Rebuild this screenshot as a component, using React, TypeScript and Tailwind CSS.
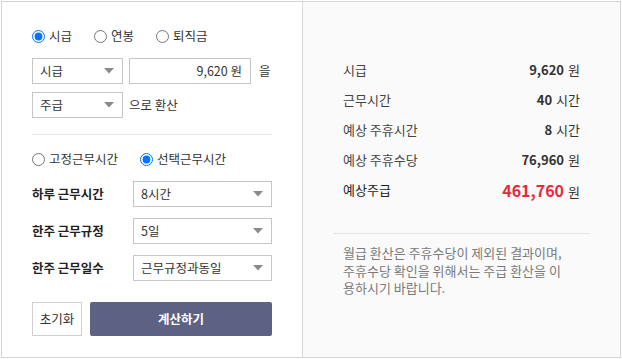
import { useState } from 'react';

const font = { fontFamily: '"Noto Sans CJK KR", "Noto Sans", sans-serif' };

function Radio({ label, checked, onChange }: { label: string; checked: boolean; onChange: () => void }) {
  return (
    <label className="flex items-center gap-[4px] cursor-pointer">
      <input type="radio" checked={checked} onChange={onChange} className="m-0 w-[13px] h-[13px]" />
      <span className="text-[12.5px] text-[#333] leading-4">{label}</span>
    </label>
  );
}

function FakeSelect({ value, className }: { value: string; className: string }) {
  return (
    <div className={`flex items-center justify-between h-[26px] border border-[#c6c6c6] bg-white pl-[7px] pr-[8px] ${className}`}>
      <span className="text-[12.5px] text-[#333]">{value}</span>
      <svg width="10" height="6" viewBox="0 0 10 6">
        <polygon points="0,0 10,0 5,5.5" fill="#8a8a8a" />
      </svg>
    </div>
  );
}

function ResultRow({ label, value, unit, highlight }: { label: string; value: string; unit: string; highlight?: boolean }) {
  return (
    <div className="flex items-center justify-between h-[30px]">
      <span className={`text-[13px] ${highlight ? 'text-[#222]' : 'text-[#444]'}`}>{label}</span>
      <span className="flex items-baseline gap-[4px]">
        <span className={highlight ? 'text-[16px] font-bold text-[#e8293b]' : 'text-[13px] font-bold text-[#333]'}>{value}</span>
        <span className="text-[13px] text-[#333]">{unit}</span>
      </span>
    </div>
  );
}

export default function App() {
  const [payType, setPayType] = useState('hourly');
  const [workType, setWorkType] = useState('select');

  return (
    <div className="w-[622px] h-[359px] bg-white pl-px pt-px" style={font}>
      <div className="w-[620px] h-[357px] border border-[#d4d4d4] flex">
        {/* 입력 영역 */}
        <div className="w-[301px] border-r border-[#d9d9d9] bg-white pl-[30px] pt-[26px]">
          <div className="flex items-center gap-[22px] h-4">
            <Radio label="시급" checked={payType === 'hourly'} onChange={() => setPayType('hourly')} />
            <Radio label="연봉" checked={payType === 'yearly'} onChange={() => setPayType('yearly')} />
            <Radio label="퇴직금" checked={payType === 'retire'} onChange={() => setPayType('retire')} />
          </div>

          <div className="flex items-center mt-[14px]">
            <FakeSelect value="시급" className="w-[91px]" />
            <div className="w-[122px] h-[26px] ml-[6px] border border-[#c6c6c6] flex items-center justify-end pr-[8px]">
              <span className="text-[12.5px] text-[#333]">9,620 원</span>
            </div>
            <span className="ml-[8px] text-[12.5px] text-[#333]">을</span>
          </div>

          <div className="flex items-center mt-[8px]">
            <FakeSelect value="주급" className="w-[91px]" />
            <span className="ml-[6px] text-[12.5px] text-[#333]">으로 환산</span>
          </div>

          <div className="w-[240px] h-px bg-[#e6e6e6] mt-[16px]" />

          <div className="flex items-center gap-[22px] h-4 mt-[16px]">
            <Radio label="고정근무시간" checked={workType === 'fixed'} onChange={() => setWorkType('fixed')} />
            <Radio label="선택근무시간" checked={workType === 'select'} onChange={() => setWorkType('select')} />
          </div>

          <div className="flex flex-col gap-[11px] mt-[14px] w-[240px]">
            <div className="flex items-center justify-between">
              <span className="text-[12.5px] font-bold text-[#222]">하루 근무시간</span>
              <FakeSelect value="8시간" className="w-[139px]" />
            </div>
            <div className="flex items-center justify-between">
              <span className="text-[12.5px] font-bold text-[#222]">한주 근무규정</span>
              <FakeSelect value="5일" className="w-[139px]" />
            </div>
            <div className="flex items-center justify-between">
              <span className="text-[12.5px] font-bold text-[#222]">한주 근무일수</span>
              <FakeSelect value="근무규정과동일" className="w-[139px]" />
            </div>
          </div>

          <div className="flex gap-[8px] mt-[21px] w-[240px]">
            <button className="w-[50px] h-[34px] border border-[#cfcfcf] bg-white text-[12.5px] text-[#333]">초기화</button>
            <button className="flex-1 h-[34px] rounded-[2px] bg-[#5d6283] text-white text-[12.5px] font-bold">계산하기</button>
          </div>
        </div>

        {/* 결과 영역 */}
        <div className="flex-1 bg-[#fafafa] px-[30px] pt-[53px]">
          <div className="px-[10px]">
            <ResultRow label="시급" value="9,620" unit="원" />
            <ResultRow label="근무시간" value="40" unit="시간" />
            <ResultRow label="예상 주휴시간" value="8" unit="시간" />
            <ResultRow label="예상 주휴수당" value="76,960" unit="원" />
            <ResultRow label="예상주급" value="461,760" unit="원" highlight />
          </div>
          <div className="h-px bg-[#e4e4e4] mt-[28px]" />
          <p className="mt-[10px] pl-[10px] text-[13px] leading-[17.5px] text-[#7a7a7a]">
            월급 환산은 주휴수당이 제외된 결과이며,
            <br />
            주휴수당 확인을 위해서는 주급 환산을 이
            <br />
            용하시기 바랍니다.
          </p>
        </div>
      </div>
    </div>
  );
}
